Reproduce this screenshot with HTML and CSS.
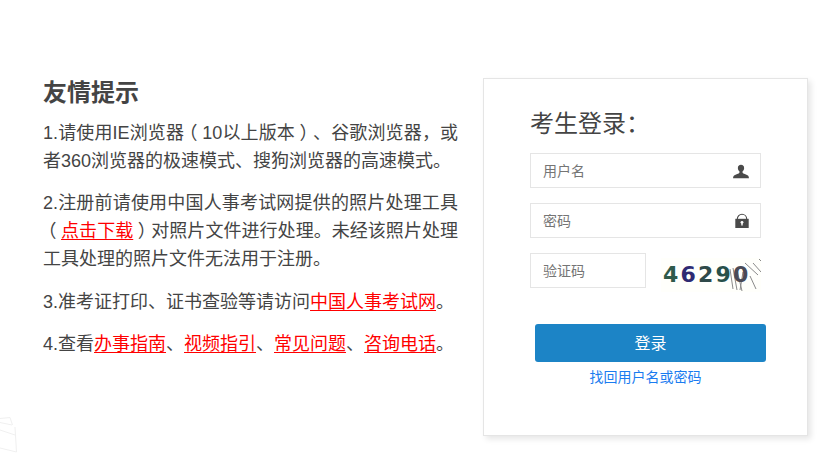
FILE: index.html
```html
<!DOCTYPE html>
<html lang="zh-CN">
<head>
<meta charset="utf-8">
<title>考生登录</title>
<link rel="stylesheet" href="styles.css">
</head>
<body>
<svg class="deco" width="60" height="53" viewBox="0 0 60 53" fill="none" stroke="#f0f0f0" stroke-width="1">
  <path d="M0 18.500L10 17.500L12.500 25"/>
  <path d="M0 22.500L12 25"/>
  <path d="M0 30L15 35"/>
  <path d="M15 27L16.500 52"/>
  <path d="M0 48L16.500 52"/>
</svg>
<main class="page">
  <section class="tips">
    <h1 class="tips-title">友情提示</h1>
    <p class="tip">1.请使用IE浏览器<span class="paren">（</span>10以上版本<span class="paren">）</span>、谷歌浏览器<span class="tc">，</span>或者360浏览器的极速模式、搜狗浏览器的高速模式。</p>
    <p class="tip">2.注册前请使用中国人事考试网提供的照片处理工具<span class="paren">（</span><a class="red" href="#">点击下载</a><span class="paren">）</span>对照片文件进行处理。未经该照片处理工具处理的照片文件无法用于注册。</p>
    <p class="tip">3.准考证打印、证书查验等请访问<a class="red" href="#">中国人事考试网</a>。</p>
    <p class="tip">4.查看<a class="red" href="#">办事指南</a>、<a class="red" href="#">视频指引</a>、<a class="red" href="#">常见问题</a>、<a class="red" href="#">咨询电话</a>。</p>
  </section>
  <section class="card">
    <h2 class="card-title">考生登录<span class="tc">：</span></h2>
    <div class="field">
      <span class="ph">用户名</span>
      <svg class="ico" width="16" height="16" viewBox="0 0 16 16" fill="#4a4a4a"><path transform="translate(8 0.800) scale(1.120 1) translate(-8 0)" d="M8 1C6.200 1 5.200 2.300 5.200 4.100C5.200 5.500 5.800 6.700 6.600 7.500V9C6.200 9.900 3.300 10.500 1.800 11.800C1.300 12.300 1 13.300 0.900 14.500H15.100C15 13.300 14.700 12.300 14.200 11.800C12.700 10.500 9.800 9.900 9.400 9V7.500C10.200 6.700 10.800 5.500 10.800 4.100C10.800 2.300 9.800 1 8 1Z"/></svg>
    </div>
    <div class="field">
      <span class="ph">密码</span>
      <svg class="ico" width="16" height="16" viewBox="0 0 16 16"><path d="M4.300 6.500V6C4.300 3.200 6.500 1.200 9 1.200S13.700 3.200 13.700 6V6.500" fill="none" stroke="#4a4a4a" stroke-width="1.100"/><path d="M2.300 5.800H15.700V15H2.300Z" fill="#4a4a4a"/><circle cx="9" cy="9.300" r="1.400" fill="#fff"/><rect x="8.300" y="9.500" width="1.400" height="3" fill="#fff"/></svg>
    </div>
    <div class="captcha-row">
      <div class="field field-short"><span class="ph">验证码</span></div>
      <div class="captcha">
        <svg class="captcha-lines" width="100" height="34" viewBox="0 0 100 34" fill="none" stroke="#8a8a8a" stroke-width="1">
          <path d="M72 10L76 32"/><path d="M76 12L81 33"/><path d="M82 14L79 32"/><path d="M84 5L97 17"/><path d="M92 5L100 14"/><path d="M89 18L95 31"/><path d="M98 1L100 3"/><path d="M69 11L72 31"/>
        </svg>
        <span class="d d1">4</span><span class="d d2">6</span><span class="d d3">2</span><span class="d d4">9</span><span class="d d5">0</span>
      </div>
    </div>
    <button class="login" type="button">登录</button>
    <a class="forgot" href="#">找回用户名或密码</a>
  </section>
</main>
</body>
</html>
```

FILE: styles.css
```css
* { box-sizing: border-box; }
html, body { margin: 0; padding: 0; height: 453px; overflow: hidden; background: #fff; }
body { font-family: "Liberation Sans", "Noto Sans CJK SC", sans-serif; color: #444; position: relative; text-spacing-trim: space-all; }
.deco { position: absolute; left: 0; top: 400px; }
.tc { font-family: "Noto Sans CJK TC", sans-serif; line-height: 0; }
.paren { font-feature-settings: "halt"; padding: 0 4.500px; }
.page { display: flex; align-items: flex-start; padding: 78px 0 0 43px; }
.tips { width: 415px; margin: 1px 25px 0 0; }
.tips-title { margin: 0 0 12px; font-size: 24px; line-height: 28px; font-weight: 700; color: #444; }
.tip { margin: 0 0 14.400px; font-size: 18px; line-height: 28px; color: #444; text-align: justify; }
.red { color: #f00; text-decoration: underline; text-decoration-thickness: 1px; text-underline-offset: 2px; }
.card { width: 325px; height: 358px; border: 1px solid #e5e5e5; background: #fff; box-shadow: 3px 3px 6px rgba(0,0,0,.1); padding: 29px 46px 0; display: flex; flex-direction: column; }
.card-title { margin: 0 0 13px; font-size: 24px; line-height: 32px; font-weight: 400; color: #444; }
.field { width: 231px; height: 35px; border: 1px solid #e5e5e5; display: flex; align-items: center; justify-content: space-between; padding: 0 11px 0 12px; margin-bottom: 15px; }
.ph { font-size: 14px; color: #757575; margin-bottom: 2px; }
.ico { display: block; }
.captcha-row { display: flex; align-items: flex-start; gap: 15px; }
.field-short { width: 116px; margin-bottom: 0; }
.captcha { position: relative; width: 100px; height: 34px; margin-top: 5px; display: flex; align-items: center; padding-left: 1px; background: #fffffb; }
.captcha-lines { position: absolute; left: 0; top: 0; }
.d { font-family: "DejaVu Sans", sans-serif; font-weight: 700; font-size: 22px; line-height: 1; width: 17.500px; text-align: center; position: relative; }
.d1 { color: #2f5a4a; }
.d2 { color: #2e2a72; }
.d3 { color: #2f4a48; }
.d4 { color: #28504a; }
.d5 { color: #4a4a55; }
.login { width: 231px; height: 38px; margin: 32px 0 0 5px; border: 0; border-radius: 3px; background: #1c84c6; color: #fff; font: 16px "Liberation Sans", "Noto Sans CJK SC", sans-serif; padding: 0 0 3px; }
.forgot { align-self: flex-start; width: 231px; margin: 6px 0 0; text-align: center; font-size: 14px; line-height: 18px; color: #1a7cf0; text-decoration: none; }
```
